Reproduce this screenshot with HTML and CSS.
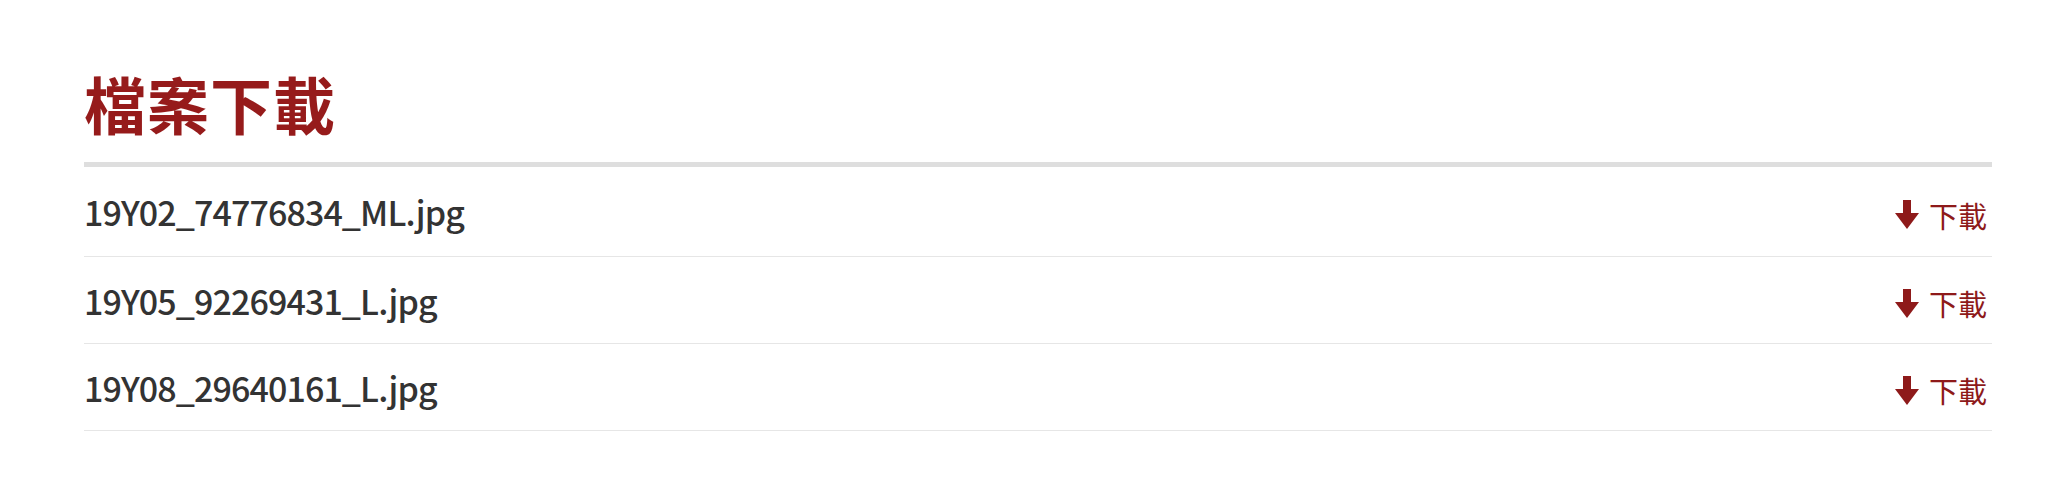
FILE: index.html
```html
<!DOCTYPE html>
<html lang="zh-Hant">
<head>
<meta charset="utf-8">
<title>檔案下載</title>
<link rel="stylesheet" href="styles.css">
</head>
<body>
<section class="downloads">
  <h2 class="title">檔案下載</h2>
  <ul class="file-list">
    <li class="file-row">
      <span class="file-name">19Y02_74776834_ML.jpg</span>
      <a class="dl-link" href="#"><svg class="dl-icon" viewBox="0 0 24 29" width="24" height="29"><rect x="8" y="0" width="8" height="15"/><polygon points="0,13 24,13 12,29"/></svg><span>下載</span></a>
    </li>
    <li class="file-row">
      <span class="file-name">19Y05_92269431_L.jpg</span>
      <a class="dl-link" href="#"><svg class="dl-icon" viewBox="0 0 24 29" width="24" height="29"><rect x="8" y="0" width="8" height="15"/><polygon points="0,13 24,13 12,29"/></svg><span>下載</span></a>
    </li>
    <li class="file-row">
      <span class="file-name">19Y08_29640161_L.jpg</span>
      <a class="dl-link" href="#"><svg class="dl-icon" viewBox="0 0 24 29" width="24" height="29"><rect x="8" y="0" width="8" height="15"/><polygon points="0,13 24,13 12,29"/></svg><span>下載</span></a>
    </li>
  </ul>
</section>
</body>
</html>
```
FILE: styles.css
```css
html, body {
  margin: 0;
  padding: 0;
  background: #ffffff;
}
body {
  font-family: "Noto Sans CJK TC", "Noto Sans", sans-serif;
}
.downloads {
  width: 1908px;
  padding: 66px 0 0 84px;
}
.title {
  margin: 0;
  font-size: 62px;
  line-height: 74px;
  font-weight: 700;
  letter-spacing: 1px;
  color: #961b1b;
  padding-bottom: 22px;
  border-bottom: 5px solid #dedede;
}
.file-list {
  list-style: none;
  margin: 0;
  padding: 0;
}
.file-row {
  display: flex;
  align-items: center;
  justify-content: space-between;
  height: 86px;
  border-bottom: 1px solid #e6e6e6;
}
.file-row:first-child {
  height: 89px;
}
.file-name {
  font-size: 34px;
  font-weight: 500;
  letter-spacing: -0.9px;
  color: #333333;
}
.dl-link {
  display: flex;
  align-items: center;
  gap: 10px;
  padding: 6px 5px 0 0;
  color: #8e1a1a;
  text-decoration: none;
  font-size: 29px;
}
.dl-icon {
  fill: #8e1a1a;
  display: block;
}
```
